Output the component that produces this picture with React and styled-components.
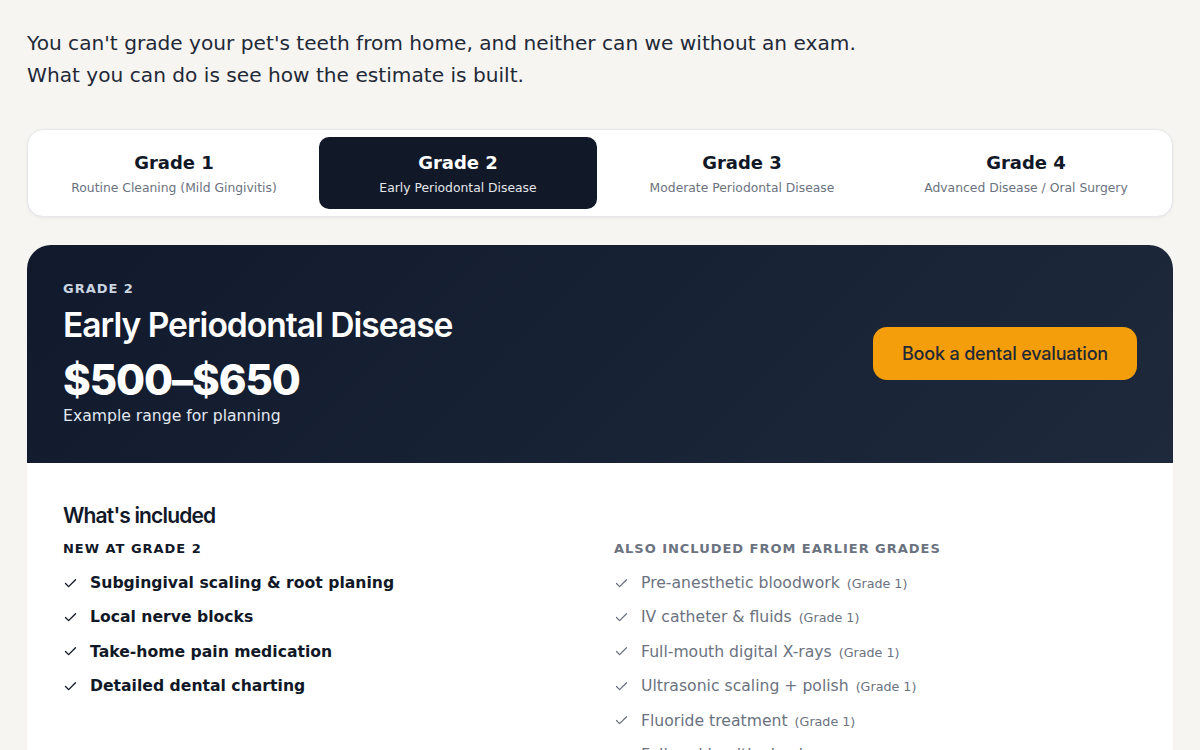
import React from "react";
import styled, { createGlobalStyle } from "styled-components";
import { Check } from "lucide-react";

const Global = createGlobalStyle`
  html, body { margin: 0; padding: 0; background: #f6f5f2; }
  body { font-family: "DejaVu Sans", sans-serif; color: #111827; }
  * { box-sizing: border-box; }
`;

const Page = styled.div`
  width: 1146px;
  margin: 0 auto;
  padding-top: 27px;
`;

const Intro = styled.p`
  margin: 0;
  font-size: 20.15px;
  line-height: 32px;
  color: #1f2937;
`;

const Tabs = styled.div`
  margin-top: 38px;
  display: grid;
  grid-template-columns: repeat(4, 1fr);
  gap: 6px;
  padding: 7px;
  background: #fff;
  border: 1px solid #e5e7eb;
  border-radius: 16px;
  box-shadow: 0 1px 3px rgba(15, 23, 42, 0.06);
`;

const Tab = styled.button`
  border: none;
  font-family: "DejaVu Sans", sans-serif;
  height: 72px;
  border-radius: 10px;
  background: ${(p) => (p.$active ? "#111827" : "transparent")};
  display: flex;
  flex-direction: column;
  align-items: center;
  justify-content: center;
  gap: 6px;
  cursor: pointer;
  padding: 2px 0 0;
`;

const TabTitle = styled.span`
  font-size: 18px;
  font-weight: 700;
  line-height: 22px;
  color: ${(p) => (p.$active ? "#ffffff" : "#111827")};
`;

const TabSub = styled.span`
  font-size: 12.35px;
  line-height: 17px;
  color: ${(p) => (p.$active ? "#e5e7eb" : "#6b7280")};
`;

const Card = styled.section`
  margin-top: 28px;
  border-radius: 24px 24px 0 0;
  overflow: hidden;
  background: #fff;
`;

const Hero = styled.div`
  background: linear-gradient(135deg, #111a2d 0%, #1e293b 100%);
  padding: 35px 36px 36px;
  display: flex;
  align-items: center;
  justify-content: space-between;
`;

const HeroText = styled.div`
  display: flex;
  flex-direction: column;
`;

const Eyebrow = styled.div`
  font-size: 13px;
  line-height: 18px;
  font-weight: 700;
  letter-spacing: 0.075em;
  color: ${(p) => p.$color || "#cbd5e1"};
`;

const HeroTitle = styled.h1`
  margin: 6px 0 0;
  font-family: "Inter", sans-serif;
  font-size: 33.6px;
  line-height: 41px;
  font-weight: 600;
  letter-spacing: -0.03em;
  color: #fff;
`;

const Price = styled.div`
  margin-top: 10px;
  font-family: "Inter", sans-serif;
  font-size: 42px;
  line-height: 50px;
  font-weight: 800;
  letter-spacing: -0.025em;
  color: #fff;
`;

const PriceNote = styled.div`
  font-size: 15.65px;
  line-height: 22px;
  color: #e2e8f0;
`;

const CTA = styled.button`
  border: none;
  background: #f59e0b;
  color: #1f2937;
  font-family: "Inter", sans-serif;
  font-size: 18px;
  font-weight: 500;
  letter-spacing: -0.01em;
  height: 53px;
  padding: 0 29px;
  border-radius: 14px;
  cursor: pointer;
`;

const Body = styled.div`
  padding: 39px 36px 40px;
`;

const SectionTitle = styled.h2`
  margin: 0;
  font-family: "Inter", sans-serif;
  font-size: 21px;
  line-height: 28px;
  font-weight: 600;
  letter-spacing: -0.04em;
  color: #111827;
`;

const Columns = styled.div`
  margin-top: 10px;
  display: grid;
  grid-template-columns: 1fr 1fr;
  column-gap: 28px;
`;

const List = styled.ul`
  list-style: none;
  margin: 13px 0 0;
  padding: 0;
  display: flex;
  flex-direction: column;
  gap: 10.4px;
`;

const Item = styled.li`
  display: flex;
  align-items: center;
  gap: 12px;
  height: 24px;
  font-size: 15.65px;
  line-height: 24px;
  font-weight: ${(p) => (p.$muted ? 400 : 700)};
  color: ${(p) => (p.$muted ? "#6b7280" : "#111827")};
  white-space: nowrap;
  svg { flex: none; color: ${(p) => (p.$muted ? "#6b7280" : "#111827")}; }
`;

const Tag = styled.span`
  font-size: 12.7px;
  line-height: 1;
  color: #6b7280;
  margin-left: 7px;
  font-weight: 400;
`;

const tabs = [
  ["Grade 1", "Routine Cleaning (Mild Gingivitis)"],
  ["Grade 2", "Early Periodontal Disease"],
  ["Grade 3", "Moderate Periodontal Disease"],
  ["Grade 4", "Advanced Disease / Oral Surgery"],
];

const newItems = [
  "Subgingival scaling & root planing",
  "Local nerve blocks",
  "Take-home pain medication",
  "Detailed dental charting",
];

const earlier = [
  "Pre-anesthetic bloodwork",
  "IV catheter & fluids",
  "Full-mouth digital X-rays",
  "Ultrasonic scaling + polish",
  "Fluoride treatment",
  "Full oral health check",
];

export default function App() {
  return (
    <>
      <Global />
      <Page>
        <Intro>
          You can't grade your pet's teeth from home, and neither can we without an exam.
          <br />
          What you can do is see how the estimate is built.
        </Intro>
        <Tabs>
          {tabs.map(([t, s], i) => (
            <Tab key={t} $active={i === 1}>
              <TabTitle $active={i === 1}>{t}</TabTitle>
              <TabSub $active={i === 1}>{s}</TabSub>
            </Tab>
          ))}
        </Tabs>
        <Card>
          <Hero>
            <HeroText>
              <Eyebrow>GRADE 2</Eyebrow>
              <HeroTitle>Early Periodontal Disease</HeroTitle>
              <Price>$500–$650</Price>
              <PriceNote>Example range for planning</PriceNote>
            </HeroText>
            <CTA>Book a dental evaluation</CTA>
          </Hero>
          <Body>
            <SectionTitle>What's included</SectionTitle>
            <Columns>
              <div>
                <Eyebrow $color="#111827">NEW AT GRADE 2</Eyebrow>
                <List>
                  {newItems.map((t) => (
                    <Item key={t}>
                      <Check size={15} strokeWidth={2.2} />
                      {t}
                    </Item>
                  ))}
                </List>
              </div>
              <div>
                <Eyebrow $color="#6b7280">ALSO INCLUDED FROM EARLIER GRADES</Eyebrow>
                <List>
                  {earlier.map((t) => (
                    <Item key={t} $muted>
                      <Check size={15} strokeWidth={2} />
                      <span>
                        {t}
                        <Tag>(Grade 1)</Tag>
                      </span>
                    </Item>
                  ))}
                </List>
              </div>
            </Columns>
          </Body>
        </Card>
      </Page>
    </>
  );
}
